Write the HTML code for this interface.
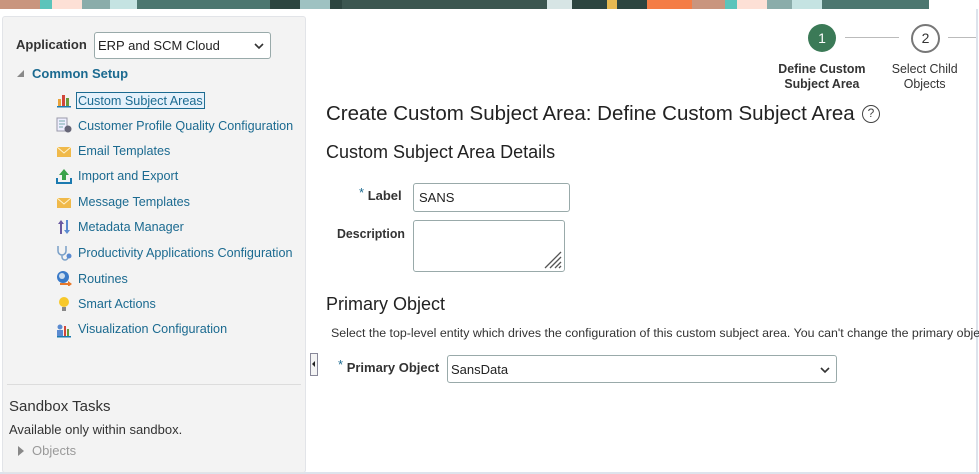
<!DOCTYPE html>
<html><head><meta charset="utf-8"><style>
*{box-sizing:border-box;margin:0;padding:0}
body{width:979px;height:474px;overflow:hidden;background:#fff;font-family:"Liberation Sans",Arial,sans-serif;position:relative}
.a{position:absolute;white-space:nowrap}
.ban{position:absolute;top:0;left:0;width:979px;height:9px;display:flex}
.ban div{height:9px}
.left{position:absolute;left:2px;top:16px;width:304px;height:457px;background:#f3f3f3;border:1px solid #e2e4e8;border-radius:3px}
.it{position:absolute;left:78px;font-size:13px;color:#1b6a90;transform:scaleX(.97);transform-origin:left center}
.ic{position:absolute;left:56px;width:16px;height:16px}
.c{display:inline-block;transform-origin:left center}
</style></head><body>
<div class="ban">
<div style="width:40px;background:#c9957e"></div><div style="width:12px;background:#5bc4bb"></div><div style="width:30px;background:#fde0d6"></div><div style="width:28px;background:#8aacaa"></div><div style="width:27px;background:#c5e3e2"></div><div style="width:133px;background:#4d7770"></div><div style="width:30px;background:#2d4540"></div><div style="width:30px;background:#9fc2c2"></div><div style="width:12px;background:#2d4540"></div><div style="width:205px;background:#3c5650"></div><div style="width:25px;background:#d7e5e5"></div><div style="width:35px;background:#2d4540"></div><div style="width:10px;background:#e7b952"></div><div style="width:30px;background:#2d4540"></div><div style="width:45px;background:#f47d46"></div><div style="width:33px;background:#c9957e"></div><div style="width:12px;background:#5bc4bb"></div><div style="width:30px;background:#fde0d6"></div><div style="width:25px;background:#8aacaa"></div><div style="width:30px;background:#c5e3e2"></div><div style="width:107px;background:#4d7770"></div>
</div>
<div style="position:absolute;left:976px;top:9px;width:2px;height:465px;background:#dde3ec"></div>
<div style="position:absolute;left:0;top:472px;width:979px;height:2px;background:#dde3ec"></div>
<div class="left"></div>
<div class="a" style="left:16px;top:37px;font-size:13px;font-weight:bold;color:#333">Application</div>
<div class="a" style="left:94px;top:32px;width:177px;height:27px;border:1px solid #9aa;border-radius:3px;background:#fff;font-size:13px;color:#222;padding:5px 0 0 3px">ERP and SCM Cloud<svg style="position:absolute;right:6px;top:10px" width="10" height="7"><path d="M1 1l4 4 4-4" stroke="#333" stroke-width="1.6" fill="none"/></svg></div>
<div class="a" style="left:17px;top:70px;width:0;height:0;border-left:7px solid transparent;border-bottom:7px solid #888"></div>
<div class="a" style="left:32px;top:66px;font-size:13px;font-weight:bold;color:#1b6a90">Common Setup</div>
<div class="it" style="top:92px;border:1px solid #1b6a90;background:#e5f1fb;padding:0 1px;left:76px">Custom Subject Areas</div>
<div class="it" style="top:118px">Customer Profile Quality Configuration</div>
<div class="it" style="top:143px">Email Templates</div>
<div class="it" style="top:168px">Import and Export</div>
<div class="it" style="top:194px">Message Templates</div>
<div class="it" style="top:219px">Metadata Manager</div>
<div class="it" style="top:245px">Productivity Applications Configuration</div>
<div class="it" style="top:271px">Routines</div>
<div class="it" style="top:296px">Smart Actions</div>
<div class="it" style="top:321px">Visualization Configuration</div>
<svg class="ic" style="top:92px"><rect x="2" y="7" width="3" height="7" fill="#e8a23a"/><rect x="6" y="3" width="3" height="11" fill="#d2473a"/><rect x="10" y="6" width="3" height="8" fill="#6a9a3a"/><rect x="1" y="14" width="14" height="1.5" fill="#1b7ab0"/></svg>
<svg class="ic" style="top:117px"><rect x="1" y="1" width="10" height="13" fill="#eef" stroke="#99a"/><path d="M3 4h6M3 7h6M3 10h4" stroke="#7aa"/><circle cx="12" cy="12" r="3.5" fill="#667"/></svg>
<svg class="ic" style="top:144px"><rect x="1" y="3" width="14" height="10" fill="#f0b94a"/><path d="M1 3l7 6 7-6" stroke="#fff3d0" fill="none"/></svg>
<svg class="ic" style="top:168px"><path d="M8 1l5 6h-3v5h-4v-5h-3z" fill="#3aa24a"/><path d="M1 10v5h14v-5" stroke="#1b7ab0" stroke-width="2" fill="none"/></svg>
<svg class="ic" style="top:195px"><rect x="1" y="3" width="14" height="10" fill="#f0b94a"/><path d="M1 3l7 6 7-6" stroke="#fff3d0" fill="none"/></svg>
<svg class="ic" style="top:219px"><path d="M5 1l3 4h-2v10h-2v-10h-2z" fill="#6a5aa0"/><path d="M11 15l3-4h-2v-10h-2v10h-2z" fill="#5a8ad0"/></svg>
<svg class="ic" style="top:245px"><path d="M2 1v5a4 4 0 0 0 8 0v-5M6 10v2a3 3 0 0 0 6 0" stroke="#7aa0c8" stroke-width="1.5" fill="none"/><circle cx="13" cy="11" r="2.5" fill="#5a8ad0"/></svg>
<svg class="ic" style="top:270px"><circle cx="7" cy="7" r="6" fill="#3a7ac8"/><circle cx="6" cy="6" r="3" fill="#cde"/><path d="M4 13h8v-2l4 3-4 3v-2h-8z" fill="#e8782a"/></svg>
<svg class="ic" style="top:296px"><circle cx="8" cy="6" r="5" fill="#f7c82a"/><rect x="6" y="11" width="4" height="4" fill="#888"/></svg>
<svg class="ic" style="top:322px"><circle cx="4" cy="5" r="2.5" fill="#5a8ad0"/><rect x="1" y="8" width="6" height="6" fill="#5a8ad0"/><rect x="8" y="4" width="2" height="10" fill="#d2473a"/><rect x="11" y="7" width="2" height="7" fill="#6a9a3a"/><rect x="1" y="14" width="14" height="1.5" fill="#1b7ab0"/></svg>
<div class="a" style="left:7px;top:384px;width:294px;height:1px;background:#dcdcdc"></div>
<div class="a" style="left:9px;top:398px;font-size:15px;color:#333">Sandbox Tasks</div>
<div class="a" style="left:9px;top:422px;font-size:13px;color:#333">Available only within sandbox.</div>
<div class="a" style="left:18px;top:446px;width:0;height:0;border-top:5px solid transparent;border-bottom:5px solid transparent;border-left:6px solid #888"></div>
<div class="a" style="left:32px;top:443px;font-size:13px;color:#999">Objects</div>
<div class="a" style="left:310px;top:353px;width:8px;height:23px;border:1px solid #889;background:#f4f4f4"></div>
<div class="a" style="left:312px;top:361px;width:0;height:0;border-top:3px solid transparent;border-bottom:3px solid transparent;border-right:3px solid #222"></div>
<div class="a" style="left:808px;top:24px;width:28px;height:28px;border-radius:50%;background:#3b7a57;color:#fff;font-size:14px;text-align:center;line-height:28px">1</div>
<div class="a" style="left:845px;top:37px;width:54px;height:1px;background:#bbb"></div>
<div class="a" style="left:911px;top:24px;width:29px;height:29px;border-radius:50%;border:2px solid #777;color:#333;font-size:14px;text-align:center;line-height:25px">2</div>
<div class="a" style="left:948px;top:37px;width:28px;height:1px;background:#bbb"></div>
<div class="a" style="left:767px;top:61px;width:110px;text-align:center;font-size:13px;font-weight:bold;color:#333;line-height:15px"><span class="c" style="transform:scaleX(.95);transform-origin:center">Define Custom<br>Subject Area</span></div>
<div class="a" style="left:880px;top:61px;width:90px;text-align:center;font-size:13px;color:#333;line-height:15px"><span class="c" style="transform:scaleX(.95);transform-origin:center">Select Child<br>Objects</span></div>
<div class="a" style="left:326px;top:102px;font-size:20.5px;color:#222">Create Custom Subject Area: Define Custom Subject Area</div>
<div class="a" style="left:862px;top:105px;width:18px;height:18px;border:1.5px solid #444;border-radius:50%;font-size:12px;text-align:center;line-height:15px;color:#444">?</div>
<div class="a" style="left:326px;top:142px;font-size:18px;color:#222">Custom Subject Area Details</div>
<div class="a" style="left:359px;top:188px;font-size:13px;color:#333"><span style="color:#1b6a90;position:relative;top:-3px">*</span> <b>Label</b></div>
<div class="a" style="left:413px;top:183px;width:157px;height:29px;border:1px solid #9aa;border-radius:3px;font-size:13px;padding:6px 0 0 5px;color:#222">SANS</div>
<div class="a" style="left:337px;top:226px;font-size:13px;color:#333;font-weight:bold"><span class="c" style="transform:scaleX(.95)">Description</span></div>
<div class="a" style="left:413px;top:220px;width:152px;height:52px;border:1px solid #9aa;border-radius:3px"><svg style="position:absolute;right:2px;bottom:2px" width="20" height="20"><path d="M19 3L3 19M19 8L8 19M19 13L13 19M19 17L17 19" stroke="#555" stroke-width="1.3"/></svg></div>
<div class="a" style="left:326px;top:294px;font-size:18px;color:#222">Primary Object</div>
<div class="a" style="left:331px;top:326px;font-size:12.4px;color:#333">Select the top-level entity which drives the configuration of this custom subject area. You can't change the primary object later.</div>
<div class="a" style="left:338px;top:360px;font-size:13px;color:#333"><span style="color:#1b6a90;position:relative;top:-3px">*</span> <b>Primary Object</b></div>
<div class="a" style="left:447px;top:355px;width:390px;height:28px;border:1px solid #9aa;border-radius:3px;font-size:13px;padding:6px 0 0 3px;color:#222">SansData<svg style="position:absolute;right:6px;top:11px" width="10" height="7"><path d="M1 1l4 4 4-4" stroke="#333" stroke-width="1.6" fill="none"/></svg></div>
</body></html>
